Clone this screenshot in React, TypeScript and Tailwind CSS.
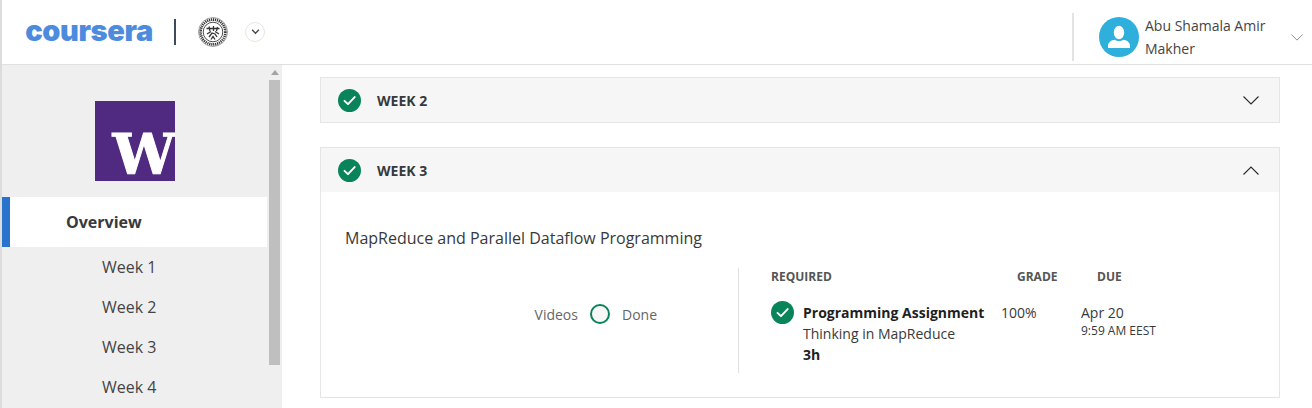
import React from "react";

const weeks = ["Week 1", "Week 2", "Week 3", "Week 4"];

const CheckBadge = ({ className }: { className: string }) => (
  <svg viewBox="0 0 24 24" className={className} aria-hidden="true">
    <circle cx="12" cy="12" r="12" fill="#08835a" />
    <path d="M6.8 12.4l3.6 3.4 7-7.4" fill="none" stroke="#fff" strokeWidth="2" strokeLinecap="round" strokeLinejoin="round" />
  </svg>
);

const Chevron = ({ up, className }: { up?: boolean; className: string }) => (
  <svg viewBox="0 0 16 9" className={className} aria-hidden="true">
    <path d={up ? "M0.5 8.5L8 1l7.5 7.5" : "M0.5 0.5L8 8l7.5-7.5"} fill="none" stroke="currentColor" strokeWidth="1.1" />
  </svg>
);

const Seal = () => (
  <svg viewBox="0 0 30 30" className="w-[30px] h-[30px]" aria-hidden="true">
    <circle cx="15" cy="15" r="14.5" fill="#fff" stroke="#888" strokeWidth="0.8" />
    <circle cx="15" cy="15" r="12.4" fill="none" stroke="#333" strokeWidth="2.6" strokeDasharray="1.2 0.8" />
    <circle cx="15" cy="15" r="9.8" fill="#fff" stroke="#222" strokeWidth="0.8" />
    <path d="M8.500 11.500h13M11 9.500l1 4.500M15.500 9v5M19.500 10l-1 4M9 17l4-2.500M21 17l-4-2.500M11 20l3-4 3 1 2 3M13 22.500l2-3 2 3" fill="none" stroke="#333" strokeWidth="1.3" />
  </svg>
);

const Avatar = () => (
  <svg viewBox="0 0 40 40" className="w-10 h-10 shrink-0" aria-hidden="true">
    <circle cx="20" cy="20" r="20" fill="#2fafdc" />
    <ellipse cx="20" cy="15.5" rx="5.2" ry="6.8" fill="#fff" />
    <path d="M9 31v-2.500c0-3.200 3.500-5.500 7-5.800 1.200 1 2.500 1.400 4 1.400s2.800-.4 4-1.400c3.500.3 7 2.600 7 5.800V31z" fill="#fff" />
  </svg>
);

const Navbar = () => (
  <header className="h-[65px] shrink-0 flex items-center border-b border-[#e0e0e0] bg-white">
    <div className="w-[126px] ml-6 flex justify-center">
      <span className="font-['Inter',sans-serif] font-black text-[29px] leading-none tracking-[-0.4px] text-[#4d8bdf] pb-1">
        coursera
      </span>
    </div>
    <div className="w-[2px] h-[26px] ml-[22px] bg-[#3d4a5c]" />
    <div className="ml-[22px]">
      <Seal />
    </div>
    <button className="ml-[17px] w-5 h-5 rounded-full border border-[#e6e6e6] flex items-center justify-center text-[#3d4a5c]">
      <svg viewBox="0 0 10 7" className="w-[9px] h-[6px]" aria-hidden="true">
        <path d="M1 1l4 4 4-4" fill="none" stroke="currentColor" strokeWidth="1.6" />
      </svg>
    </button>
    <div className="ml-auto mt-[10px] h-12 w-[2px] bg-[#e3e3e3]" />
    <div className="w-[238px] mt-[10px] flex items-center pl-[25px]">
      <Avatar />
      <div className="w-[140px] ml-[6px] text-[14px] leading-[23px] text-[#444]">Abu Shamala Amir Makher</div>
      <Chevron className="ml-[6px] w-3 h-[7px] text-[#777]" />
    </div>
  </header>
);

const Sidebar = () => (
  <aside className="w-[280px] shrink-0 flex bg-[#efefef] overflow-hidden">
    <div className="w-[265px] shrink-0">
      <div className="pt-9 pb-4 flex justify-center">
        <div className="w-20 h-20 bg-[#4f2a80] overflow-hidden flex items-end pl-[18px] pb-[6px]">
          <span className="font-['DejaVu_Serif',serif] font-bold text-[56px] leading-[41px] h-[41px] text-white [-webkit-text-stroke:1px_white]">W</span>
        </div>
      </div>
      <div className="h-[50px] bg-white border-l-[8px] border-[#2a73cc] pl-14 flex items-center text-[16px] font-bold text-[#373a3c]">
        Overview
      </div>
      {weeks.map((week) => (
        <div key={week} className="h-10 pl-[100px] flex items-center text-[16px] text-[#444]">
          {week}
        </div>
      ))}
    </div>
    <div className="ml-[2px] w-[11px] shrink-0 flex flex-col items-center">
      <div className="mt-[5px] border-x-[4px] border-x-transparent border-b-[5px] border-b-[#a3a3a3]" />
      <div className="mt-[5px] w-full h-[285px] bg-[#bfbfbf]" />
    </div>
  </aside>
);

const WeekHeader = ({ title, open }: { title: string; open?: boolean }) => (
  <div className="h-11 bg-[#f6f6f6] flex items-center pl-[17px] pr-[20px]">
    <CheckBadge className="w-[23px] h-[23px]" />
    <span className="ml-[16px] text-[14px] font-bold text-[#373a3c]">{title}</span>
    <Chevron up={open} className="ml-auto w-4 h-[9px] text-[#2a2a2a]" />
  </div>
);

const Assignment = () => (
  <div className="ml-8 flex-1 text-[14px] text-[#373a3c]">
    <div className="flex text-[12px] font-bold text-[#555] h-[18px] items-center">
      <span className="w-[246px]">REQUIRED</span>
      <span className="w-[80px]">GRADE</span>
      <span>DUE</span>
    </div>
    <div className="mt-[16px] flex">
      <CheckBadge className="w-[23px] h-[23px] shrink-0 -mt-[1px]" />
      <div className="ml-[9px] w-[198px] leading-[21px]">
        <div className="font-bold text-[#1f1f1f] whitespace-nowrap">Programming Assignment</div>
        <div>Thinking in MapReduce</div>
        <div className="font-bold text-[#1f1f1f]">3h</div>
      </div>
      <div className="w-[80px] leading-[21px]">100%</div>
      <div>
        <div className="leading-[21px]">Apr 20</div>
        <div className="text-[12px] leading-[15px]">9:59 AM EEST</div>
      </div>
    </div>
  </div>
);

export default function App() {
  return (
    <div className="h-[408px] w-[1312px] overflow-hidden flex flex-col bg-white border-l-2 border-[#dcdcdc] font-['Open_Sans',sans-serif]">
      <Navbar />
      <div className="flex flex-1 min-h-0">
        <Sidebar />
        <main className="ml-[38px] w-[960px] pt-3">
          <section className="border border-[#e5e5e5]">
            <WeekHeader title="WEEK 2" />
          </section>
          <section className="mt-6 border border-[#e5e5e5]">
            <WeekHeader title="WEEK 3" open />
            <div className="h-[205px] px-6 pt-9">
              <h2 className="text-[16px] leading-5 text-[#373a3c]">MapReduce and Parallel Dataflow Programming</h2>
              <div className="mt-5 flex">
                <div className="w-[394px] h-[105px] border-r border-[#e0e0e0] flex items-center justify-end pr-[81px] text-[14px] text-[#666] pb-[13px]">
                  <span>Videos</span>
                  <span className="ml-3 w-5 h-5 rounded-full border-2 border-[#08835a] bg-[#f7f7f7]" />
                  <span className="ml-3">Done</span>
                </div>
                <Assignment />
              </div>
            </div>
          </section>
        </main>
      </div>
    </div>
  );
}
